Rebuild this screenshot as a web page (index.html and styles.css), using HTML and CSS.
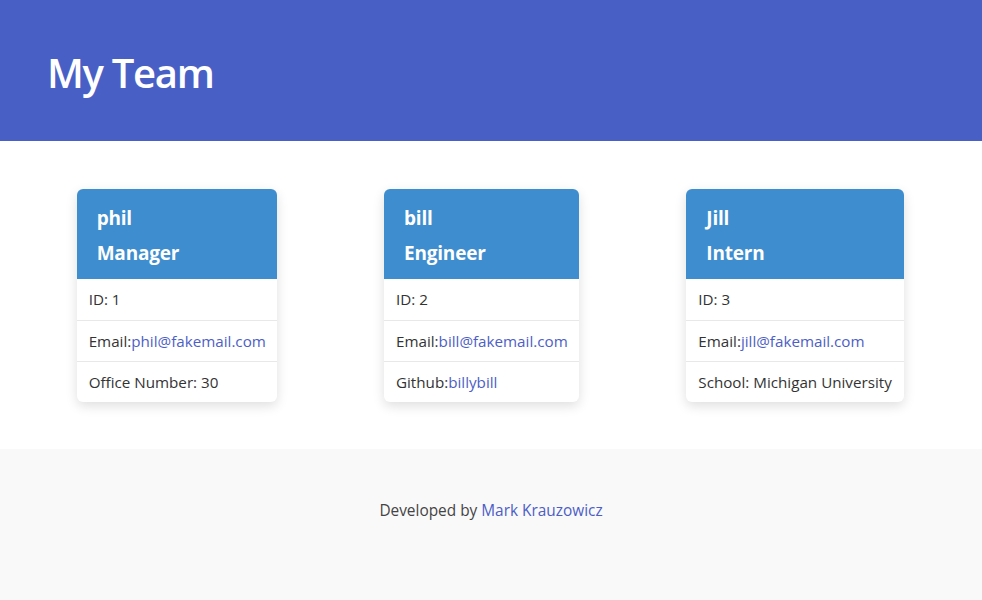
FILE: index.html
```html
<!DOCTYPE html>
<html lang="en">
<head>
<meta charset="utf-8">
<title>My Team</title>
<link rel="stylesheet" href="styles.css">
</head>
<body>
<header class="hero">
  <h1 class="hero-title">My Team</h1>
</header>
<main class="team">
  <div class="team-row">
    <article class="card card-manager">
      <div class="card-head">
        <h2 class="card-name">phil</h2>
        <h2 class="card-role">Manager</h2>
      </div>
      <ul class="card-list">
        <li class="card-item">ID: 1</li>
        <li class="card-item">Email:<a href="#" class="link">phil@fakemail.com</a></li>
        <li class="card-item">Office Number: 30</li>
      </ul>
    </article>
    <article class="card card-engineer">
      <div class="card-head">
        <h2 class="card-name">bill</h2>
        <h2 class="card-role">Engineer</h2>
      </div>
      <ul class="card-list">
        <li class="card-item">ID: 2</li>
        <li class="card-item">Email:<a href="#" class="link">bill@fakemail.com</a></li>
        <li class="card-item">Github:<a href="#" class="link">billybill</a></li>
      </ul>
    </article>
    <article class="card card-intern">
      <div class="card-head">
        <h2 class="card-name">Jill</h2>
        <h2 class="card-role">Intern</h2>
      </div>
      <ul class="card-list">
        <li class="card-item">ID: 3</li>
        <li class="card-item">Email:<a href="#" class="link">jill@fakemail.com</a></li>
        <li class="card-item">School: Michigan University</li>
      </ul>
    </article>
  </div>
</main>
<footer class="footer">
  <p class="footer-text">Developed by <a href="#" class="link">Mark Krauzowicz</a></p>
</footer>
</body>
</html>
```
FILE: styles.css
```css
* { box-sizing: border-box; }
html, body { margin: 0; padding: 0; }
body {
  font-family: "Open Sans", "Noto Sans", "Liberation Sans", sans-serif;
  color: #333;
  background: #fff;
  width: 982px;
  height: 600px;
  overflow: hidden;
}
.hero {
  background: #4860c6;
  height: 141px;
  display: flex;
  align-items: center;
  padding-left: 47px;
}
.hero-title {
  margin: 0;
  color: #fff;
  font-size: 40px;
  font-weight: 600;
  letter-spacing: -1.3px;
  line-height: 1;
  padding-top: 4px;
}
.team {
  padding: 48px 24px 48px 23px;
  height: 308px;
}
.team-row {
  display: flex;
  justify-content: space-around;
  align-items: flex-start;
}
.card {
  background: #fff;
  border-radius: 6px;
  box-shadow: 0 4px 12px rgba(0,0,0,0.13);
  overflow: hidden;
}
.card-manager { width: 200px; }
.card-engineer { width: 195px; }
.card-intern { width: 218px; }
.card-head {
  background: #3e8dcf;
  color: #fff;
  height: 90px;
  padding: 12px 20px 0;
}
.card-name, .card-role {
  margin: 0;
  font-size: 19px;
  font-weight: 700;
  line-height: 35px;
  letter-spacing: -0.2px;
}
.card-list {
  list-style: none;
  margin: 0;
  padding: 0;
}
.card-item {
  height: 41px;
  line-height: 40px;
  padding: 0 12px;
  font-size: 15.2px;
  white-space: nowrap;
  border-top: 1px solid #e8e8e8;
}
.card-item:first-child { border-top: 0; }
.link {
  color: #4d5ec6;
  text-decoration: none;
}
.footer {
  background: #f9f9fa;
  height: 151px;
  padding-top: 51px;
}
.footer-text {
  margin: 0;
  text-align: center;
  font-size: 15.4px;
  line-height: 22px;
  color: #444;
}
```
